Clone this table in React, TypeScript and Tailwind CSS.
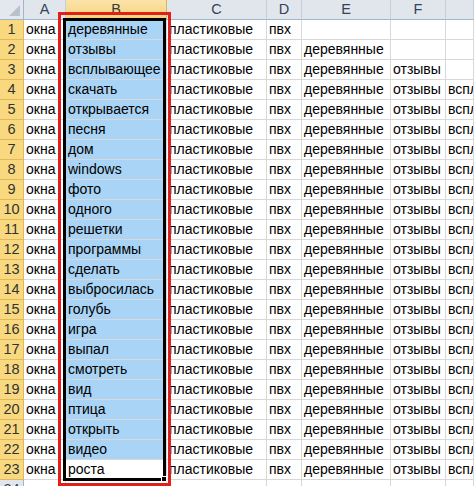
import React from "react";

const B = [
  "деревянные", "отзывы", "всплывающее", "скачать", "открывается", "песня", "дом",
  "windows", "фото", "одного", "решетки", "программы", "сделать", "выбросилась",
  "голубь", "игра", "выпал", "смотреть", "вид", "птица", "открыть", "видео", "роста",
];

function rowData(i: number): string[] {
  const r = i + 1;
  return [
    "окна",
    B[i],
    "пластиковые",
    "пвх",
    r >= 2 ? "деревянные" : "",
    r >= 3 ? "отзывы" : "",
    r >= 4 ? "всплывающее" : "",
  ];
}

const letters = ["A", "B", "C", "D", "E", "F", ""];

export default function App() {
  return (
    <div
      className="relative w-[474px] h-[486px] overflow-hidden bg-white text-black"
      style={{ fontFamily: '"Liberation Sans", Arial, sans-serif' }}
    >
      <div className="grid grid-cols-[24px_42px_101px_100px_35px_89px_55px_1fr] auto-rows-[20px]">
        {/* header row */}
        <div className="relative h-[20px] bg-[#e4e8ee] border-r border-b border-[#9eb6ce]">
          <div className="absolute right-[3px] bottom-[3px] w-0 h-0 border-l-[11px] border-l-transparent border-b-[11px] border-b-[#b8c2ce]" />
        </div>
        {letters.map((l, j) => (
          <div
            key={"h" + j}
            className={
              "h-[20px] flex items-center justify-center text-[14.5px] leading-[19px] border-r border-b " +
              (j === 1
                ? "bg-gradient-to-b from-[#fbe3a8] to-[#f6d27c] border-[#e0b45a] text-[#3a3a3a]"
                : "bg-[#e1e6ed] border-[#c5ceda] text-[#34435a] border-b-[#9eb6ce]")
            }
          >
            {l}
          </div>
        ))}
        {Array.from({ length: 24 }).map((_, i) => {
          const sel = i < 23;
          const data = sel ? rowData(i) : ["", "", "", "", "", "", ""];
          return (
            <React.Fragment key={i}>
              <div
                className={
                  "h-[20px] flex items-center justify-center text-[14.5px] leading-[19px] border-r border-b " +
                  (sel
                    ? "bg-[#f9d97f] border-[#e2b85c] text-[#333333]"
                    : "bg-[#e1e6ed] border-[#9eb6ce] text-[#34435a]")
                }
              >
                {i + 1}
              </div>
              {data.map((t, j) => (
                <div
                  key={j}
                  className={
                    "h-[20px] overflow-hidden whitespace-nowrap px-[2px] text-[14px] leading-[19px] border-r border-b border-[#d8d8d8] " +
                    (j === 1 && i < 22 ? "bg-[#a9d4f5]" : "bg-white")
                  }
                >
                  {t}
                </div>
              ))}
            </React.Fragment>
          );
        })}
      </div>

      {/* selection border */}
      <div className="absolute left-[63px] top-[18px] w-[103px] h-[463px] border-[3px] border-black" />
      <div className="absolute left-[161px] top-[476px] w-[6px] h-[6px] bg-black border border-white" />

      {/* red highlight rectangle */}
      <div className="absolute left-[58px] top-[12px] w-[113px] h-[474px] border-[3px] border-[#e0201b]" />
    </div>
  );
}
